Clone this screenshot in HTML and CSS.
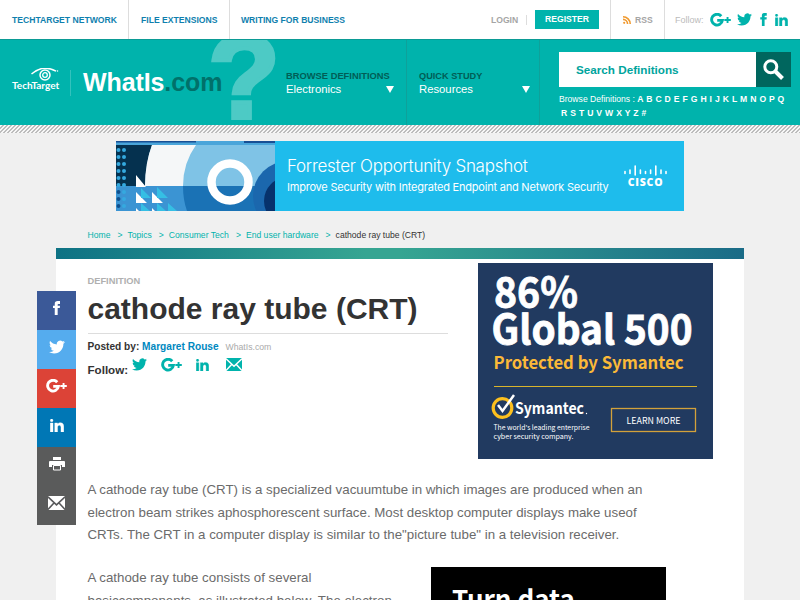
FILE: index.html
```html
<!DOCTYPE html>
<html lang="en">
<head>
<meta charset="UTF-8" />
<meta name="viewport" content="width=device-width, initial-scale=1" />
<title>What is cathode ray tube (CRT)? - WhatIs.com</title>
<link rel="stylesheet" href="styles.css">
</head>
<body>

<!-- shared icons -->
<svg class="sprite" width="0" height="0">
  <symbol id="twitter" viewBox="0 2 24 20"><path d="M23.953 4.57a10 10 0 01-2.825.775 4.958 4.958 0 002.163-2.723c-.951.555-2.005.959-3.127 1.184a4.92 4.92 0 00-8.384 4.482C7.69 8.095 4.067 6.13 1.64 3.162a4.822 4.822 0 00-.666 2.475c0 1.71.87 3.213 2.188 4.096a4.904 4.904 0 01-2.228-.616v.06a4.923 4.923 0 003.946 4.827 4.996 4.996 0 01-2.212.085 4.936 4.936 0 004.604 3.417 9.867 9.867 0 01-6.102 2.105c-.39 0-.779-.023-1.17-.067a13.995 13.995 0 007.557 2.209c9.053 0 13.998-7.496 13.998-13.985 0-.21 0-.42-.015-.63A9.935 9.935 0 0024 4.59z"/></symbol>
  <symbol id="facebook" viewBox="6 0 12 24"><path d="M9 8H6v4h3v12h5V12h3.642L18 8h-4V6.333C14 5.378 14.192 5 15.115 5H18V0h-3.808C10.596 0 9 1.583 9 4.615V8z"/></symbol>
  <symbol id="linkedin" viewBox="0 1 24 23"><path d="M4.980 3.500c0 1.381-1.110 2.500-2.480 2.500S.02 4.881.02 3.500C.02 2.120 1.130 1 2.500 1s2.480 1.120 2.480 2.500zM5 8H0v16h5V8zm7.982 0H8.014v16h4.969v-8.399c0-4.670 6.029-5.052 6.029 0V24H24V13.869c0-7.880-8.922-7.593-11.018-3.714V8z" stroke="currentColor" stroke-width=".6"/></symbol>
  <symbol id="gplus" viewBox="0 0 21 14"><path d="M11.200 3.200A5.400 5.400 0 1 0 12.400 7.400H7.200" fill="none" stroke="currentColor" stroke-width="2.900"/><path d="M16.600 4h1.900v2.100h2.300V8h-2.300v2.100h-1.900V8h-2.300V6.100h2.300z"/></symbol>
  <symbol id="mail" viewBox="0 0 16 13"><rect width="16" height="13" rx="1"/><path d="M0 .8l8 7.400 8-7.400M0 12.500l5.600-6M16 12.500l-5.600-6" fill="none" stroke="var(--line)" stroke-width="1.500"/></symbol>
  <symbol id="print" viewBox="0 0 16 14"><path d="M4 0h8v3H4zM1 4h14a1 1 0 0 1 1 1v5h-3V8H3v2H0V5a1 1 0 0 1 1-1z"/><path d="M4.500 8.500h7v4.500h-7z" fill="none" stroke="currentColor"/></symbol>
</svg>

<nav class="topbar">
  <a href="#" class="network">TECHTARGET NETWORK</a>
  <a href="#" class="files">FILE EXTENSIONS</a>
  <a href="#" class="writing">WRITING FOR BUSINESS</a>
  <div class="account">
    <a href="#" class="login">LOGIN</a>
    <a href="#" class="register">REGISTER</a>
  </div>
  <a href="#" class="rss">
    <svg width="8" height="8" viewBox="0 0 8 8"><circle cx="1.200" cy="6.800" r="1.100" fill="#f09a30"/><path d="M0 3.400a4.600 4.600 0 0 1 4.600 4.600M0 .8A7.200 7.200 0 0 1 7.200 8" fill="none" stroke="#f09a30" stroke-width="1.600"/></svg>
    RSS
  </a>
  <div class="follow">
    <span>Follow:</span>
    <svg class="icon" width="21" height="14"><use href="#gplus"/></svg>
    <svg class="icon" width="15" height="13"><use href="#twitter"/></svg>
    <svg class="icon" width="7" height="13"><use href="#facebook"/></svg>
    <svg class="icon" width="13" height="12"><use href="#linkedin"/></svg>
  </div>
</nav>

<header class="header">
  <div class="brand">
    <div class="techtarget">
      <svg width="28" height="13" viewBox="0 0 28 13" fill="none" stroke="#fff"><path d="M.5 6Q12-4 25 3.200" stroke-width="1.500"/><circle cx="14" cy="7" r="5" stroke-width="1.500"/><circle cx="14" cy="7" r="2.300" stroke-width="1.300"/><circle cx="26.500" cy="3" r=".5" stroke-width=".7"/></svg>
      <span>TechTarget</span>
    </div>
    <div class="question">?</div>
    <div class="site-name">WhatIs<span>.com</span></div>
  </div>
  <div class="menu browse">
    <div>BROWSE DEFINITIONS</div>
    <p>Electronics <i class="arrow"></i></p>
  </div>
  <div class="menu study">
    <div>QUICK STUDY</div>
    <p>Resources <i class="arrow"></i></p>
  </div>
  <div class="search">
    <div class="search-box">
      <span class="search-text">Search Definitions</span>
      <button class="search-btn" aria-label="Search">
        <svg width="21" height="21" viewBox="0 0 21 21" fill="none" stroke="#fff"><circle cx="7.800" cy="7.800" r="6" stroke-width="3"/><path d="M12 12l7.500 7.500" stroke-width="4"/></svg>
      </button>
    </div>
    <div class="letters"><span>Browse Definitions :</span> <b>A B C D E F G H I J K L M N O P Q</b></div>
    <div class="letters second"><b>R S T U V W X Y Z #</b></div>
  </div>
</header>
<div class="stripes"></div>

<div class="banner">
  <svg class="banner-art" width="159" height="70" viewBox="0 0 159 70">
    <rect width="159" height="70" fill="#7fc3e6"/>
    <path d="M0 4h36Q30 20 29 45H0z" fill="#05314f"/>
    <path d="M36 4h44Q67 22 67 45H29Q29 22 36 4z" fill="#f5f7f8"/>
    <path d="M0 45h159v25H0z" fill="#1a72b5"/>
    <path d="M0 45h67q0 14 4 25H0z" fill="#3b94d3"/>
    <path d="M0 0h159v4H0z" fill="#4aa5da"/>
    <path d="M0 0h80v1.500H0zM128 0h31v2h-31z" fill="#174f94"/>
    <circle cx="172" cy="55" r="35" fill="#1b67ad"/>
    <circle cx="172" cy="60" r="24" fill="#07326c"/>
    <circle cx="114" cy="41" r="18.500" fill="none" stroke="#fff" stroke-width="8.500"/>
    <path d="M2.500 9v60M8 9v60" stroke="#35a9df" stroke-width="4" stroke-linecap="round" stroke-dasharray="0 7"/>
    <path d="M2.500 51v18" stroke="#114f8d" stroke-width="4" stroke-linecap="round" stroke-dasharray="0 7"/>
    <path d="M20 34l10 12H20zM20 51l11 11H20zM36 51l11 11H36zM20 67l3 3h-3zM36 67l3 3h-3z" fill="#fff"/>
    <path d="M25 47l10 10H25zM41 46l11 11H41zM25 62l9 8h-9zM41 62l9 8h-9zM52 62l9 8h-9z" fill="#35bfe4"/>
  </svg>
  <div class="banner-text">
    <div class="banner-title">Forrester Opportunity Snapshot</div>
    <div class="banner-sub">Improve Security with Integrated Endpoint and Network Security</div>
  </div>
  <div class="cisco">
    <svg width="43" height="11" viewBox="0 0 43 11" stroke="#fff" stroke-width="1.600" stroke-linecap="round"><path d="M1 6.500v2M6 5v3.500M11.200 1v9M16.400 5v3.500M21.500 6.500v2M26.600 5v3.500M31.800 1v9M37 5v3.500M42 6.500v2"/></svg>
    <span>CISCO</span>
  </div>
</div>

<div class="breadcrumb">
  <a href="#">Home</a><i>&gt;</i><a href="#">Topics</a><i>&gt;</i><a href="#">Consumer Tech</a><i>&gt;</i><a href="#">End user hardware</a><i>&gt;</i><span>cathode ray tube (CRT)</span>
</div>

<main class="page">
  <aside class="share">
    <a href="#" class="fb"><svg class="icon" width="7" height="14"><use href="#facebook"/></svg></a>
    <a href="#" class="tw"><svg class="icon" width="16" height="14"><use href="#twitter"/></svg></a>
    <a href="#" class="gp"><svg class="icon" width="23" height="14"><use href="#gplus"/></svg></a>
    <a href="#" class="li"><svg class="icon" width="14" height="13"><use href="#linkedin"/></svg></a>
    <a href="#" class="pr"><svg class="icon" width="16" height="14"><use href="#print"/></svg></a>
    <a href="#" class="ml"><svg class="icon" width="17" height="14"><use href="#mail"/></svg></a>
  </aside>

  <div class="top">
    <div class="intro">
      <div class="label">DEFINITION</div>
      <h1>cathode ray tube (CRT)</h1>
      <div class="author"><b>Posted by:</b> <a href="#">Margaret Rouse</a> <span>WhatIs.com</span></div>
      <div class="author-follow">
        <b>Follow:</b>
        <svg class="icon" width="15" height="13"><use href="#twitter"/></svg>
        <svg class="icon" width="21" height="14"><use href="#gplus"/></svg>
        <svg class="icon" width="13" height="12"><use href="#linkedin"/></svg>
        <svg class="icon" width="16" height="13"><use href="#mail"/></svg>
      </div>
    </div>
    <div class="ad">
      <svg width="235" height="196" viewBox="0 0 235 196">
        <rect width="235" height="196" fill="#213a60"/>
        <g class="ad-font">
          <text x="16" y="43.500" class="ad-big" textLength="84" lengthAdjust="spacingAndGlyphs">86%</text>
          <text x="13.500" y="80.500" class="ad-big" textLength="201" lengthAdjust="spacingAndGlyphs">Global 500</text>
          <text x="15.500" y="106" class="ad-mid" textLength="190" lengthAdjust="spacingAndGlyphs">Protected by Symantec</text>
          <text x="37" y="151" class="ad-logo" textLength="69" lengthAdjust="spacingAndGlyphs">Symantec</text>
          <text x="15.500" y="167" class="ad-small" textLength="96" lengthAdjust="spacingAndGlyphs">The world's leading enterprise</text>
          <text x="15.500" y="176" class="ad-small" textLength="80" lengthAdjust="spacingAndGlyphs">cyber security company.</text>
          <text x="148.500" y="160.500" class="ad-btn" textLength="54" lengthAdjust="spacingAndGlyphs">LEARN MORE</text>
        </g>
        <path d="M16 123.500h203" stroke="#d9b42c"/>
        <circle cx="24.500" cy="145" r="9.300" fill="none" stroke="#fdc01e" stroke-width="3.200"/>
        <path d="M20 142l4.500 6L36 132" fill="none" stroke="#fff" stroke-width="2.500"/>
        <circle cx="108.500" cy="150.500" r=".7" fill="#fff"/>
        <rect x="133.500" y="145.500" width="84" height="23" fill="none" stroke="#d3a13b" stroke-width="1.300"/>
      </svg>
    </div>
  </div>

  <article class="article">
    <p>A cathode ray tube (CRT) is a specialized vacuumtube in which images are produced when an<br>electron beam strikes aphosphorescent surface. Most desktop computer displays make useof<br>CRTs. The CRT in a computer display is similar to the"picture tube" in a television receiver.</p>
    <div class="black-ad">Turn data</div>
    <p>A cathode ray tube consists of several<br>basiccomponents, as illustrated below. The electron</p>
  </article>
</main>

</body>
</html>
```
FILE: styles.css
```css
* {
  box-sizing: border-box;
}
body {
  font-family: "Liberation Sans", Arial, sans-serif;
  background: #f0f0f0;
  color: #333;
  margin: 0;
  height: 600px;
  overflow: hidden;
}
a {
  color: #00b3ac;
  text-decoration: none;
}
.sprite {
  position: absolute;
}
.icon {
  fill: currentColor;
  color: #00b3ac;
  --line: #fff;
  flex: none;
}

/* top bar */
.topbar {
  display: flex;
  height: 40px;
  background: #fff;
  border-bottom: 1px solid #0b9b95;
  font-size: 8.6px;
  font-weight: bold;
}
.topbar > * {
  display: flex;
  align-items: center;
  border-right: 1px solid #ddd;
  padding-left: 12px;
}
.topbar > a {
  color: #0f7fae;
}
.topbar .network {
  width: 129px;
}
.topbar .files {
  width: 101px;
}
.topbar .writing {
  border: none;
  padding-left: 11px;
}
.account {
  margin-left: auto;
  width: 132px;
}
.account .login {
  color: #a5a5a5;
  border-right: 1px solid #ddd;
  width: 36px;
  margin-right: 8px;
}
.account .register {
  background: #00b3ac;
  color: #fff;
  width: 64px;
  height: 19px;
  line-height: 19px;
  text-align: center;
}
.topbar .rss {
  width: 54px;
  color: #a5a5a5;
  gap: 4px;
}
.follow {
  width: 135px;
  gap: 6px;
  font-size: 9px;
  font-weight: normal;
  color: #bbb;
}
.topbar .follow {
  border: none;
  padding-left: 10px;
}
.follow .icon:nth-of-type(n+3) {
  margin-left: 2px;
}

/* header */
.header {
  display: flex;
  height: 85px;
  background: #00b3ac;
  color: #fff;
}
.brand {
  position: relative;
  display: flex;
  align-items: center;
  width: 274px;
  padding-left: 12px;
}
.techtarget {
  width: 59px;
  height: 26px;
  border-right: 1px solid #33c2bd;
  font-family: Lato, sans-serif;
  font-weight: bold;
  font-size: 10px;
}
.techtarget svg {
  display: block;
  margin: -2px 0 -2px 19px;
}
.techtarget span {
  display: block;
  line-height: 12px;
}
.site-name {
  position: relative;
  margin-left: 12px;
  font-size: 25px;
  font-weight: bold;
  letter-spacing: -0.1px;
}
.site-name span {
  color: #00716a;
}
.question {
  position: absolute;
  left: 208px;
  top: 0;
  width: 76px;
  height: 85px;
  overflow: hidden;
  font-size: 118px;
  font-weight: bold;
  line-height: 74px;
  color: #4dcac5;
  -webkit-text-stroke: 4px #4dcac5;
}
.menu {
  width: 133px;
  border-right: 1px solid #0ea19a;
  padding: 30px 0 0 12px;
  font-size: 11.3px;
}
.menu div {
  color: #005e56;
  font-size: 9.35px;
  font-weight: bold;
  line-height: 12px;
  white-space: nowrap;
}
.menu.study div {
  font-size: 9.2px;
}
.menu p {
  display: flex;
  justify-content: space-between;
  align-items: center;
  margin: 0;
  padding-right: 9px;
  line-height: 14px;
}
.menu.browse p {
  padding-right: 12px;
}
.arrow {
  border: 4.5px solid transparent;
  border-top: 7px solid #fff;
  border-bottom: 0;
}
.search {
  padding: 12px 0 0 19px;
}
.search-box {
  display: flex;
  width: 232px;
  height: 35px;
  background: #fff;
  margin-bottom: 5px;
}
.search-text {
  flex: 1;
  padding-left: 17px;
  color: #00a49d;
  font-size: 11.7px;
  font-weight: bold;
  line-height: 35px;
}
.search-btn {
  width: 35px;
  border: none;
  padding: 0;
  background: #00665e;
  display: flex;
  align-items: center;
  justify-content: center;
}
.letters {
  font-size: 8.6px;
  line-height: 14px;
  white-space: nowrap;
}
.letters b {
  letter-spacing: .3px;
}
.letters.second {
  padding-left: 2px;
}
.stripes {
  height: 8px;
  background: repeating-linear-gradient(135deg, #f7f7f7 0 1.8px, #bdbdbd 1.8px 2.83px);
}

/* banner */
.banner {
  display: flex;
  width: 568px;
  height: 70px;
  margin: 8px 0 0 116px;
  background: #1ebcec;
  color: #fff;
}
.banner-text {
  width: 349px;
  padding: 15px 0 0 12px;
  font-family: Inter, sans-serif;
  white-space: nowrap;
}
.banner-title {
  font-size: 17px;
  font-weight: 300;
  line-height: 20px;
  letter-spacing: -0.27px;
}
.banner-sub {
  font-size: 11px;
  line-height: 22px;
  letter-spacing: -0.21px;
}
.cisco {
  padding-top: 24px;
  width: 43px;
  text-align: center;
  font-family: "Open Sans", sans-serif;
  font-weight: 800;
  font-size: 10.5px;
  letter-spacing: .8px;
  line-height: 13px;
}
.cisco svg {
  display: block;
}

.breadcrumb {
  margin: 19px 0 0 87.5px;
  height: 18px;
  line-height: 10px;
  font-size: 8.6px;
}
.breadcrumb i {
  font-style: normal;
  color: #00b3ac;
  margin: 0 5px 0 7px;
}

/* page */
.page {
  position: relative;
  width: 688px;
  height: 352px;
  margin-left: 56px;
  padding: 0 31px 0 31.5px;
  background: #fff;
}
.page::before {
  content: "";
  display: block;
  height: 11px;
  margin: 0 -31px 0 -31.5px;
  background: linear-gradient(90deg, #0e7284, #36a592 45%, #36a592 50%, #1a6b87);
}
.share {
  position: absolute;
  left: -19px;
  top: 43px;
}
.share a {
  display: flex;
  align-items: center;
  justify-content: center;
  width: 39px;
  height: 39px;
  padding-bottom: 5px;
}
.share .icon {
  color: #fff;
  --line: #58595b;
}
.fb { background: #3b5998; }
.tw { background: #55acee; }
.gp { background: #dc4337; }
.li { background: #0077b5; }
.pr, .ml { background: #5a5b5b; }

.top {
  display: flex;
  justify-content: space-between;
  height: 220px;
}
.intro {
  width: 360px;
  padding-top: 17px;
}
.label {
  color: #b0b0b0;
  font-size: 9.3px;
  font-weight: bold;
  line-height: 10px;
}
h1 {
  margin: 0 0 6px;
  height: 48px;
  border-bottom: 1px solid #ddd;
  font-size: 30px;
  line-height: 45px;
  white-space: nowrap;
}
.author {
  font-size: 10.15px;
  line-height: 14px;
}
.author a {
  color: #0088c0;
  font-weight: bold;
}
.author span {
  color: #aaa;
  font-size: 8.7px;
  margin-left: 4px;
}
.author-follow {
  display: flex;
  align-items: center;
  font-size: 11.6px;
  margin-top: -1px;
}
.author-follow b {
  margin: 10px 4px 0 0;
}
.author-follow .icon {
  margin-right: 14px;
}
.author-follow .icon:nth-of-type(3) {
  margin-right: 17px;
}
.ad {
  margin: 4px 0 0;
}
.ad svg {
  display: block;
}
.ad-font {
  font-family: "Noto Sans CJK SC", sans-serif;
  fill: #fff;
}
.ad-big {
  font-size: 40px;
  font-weight: bold;
  stroke: #fff;
  stroke-width: .8px;
}
.ad-mid {
  font-size: 17.5px;
  font-weight: bold;
  fill: #fbb938;
}
.ad-logo {
  font-size: 16px;
  font-weight: bold;
}
.ad-small {
  font-size: 7px;
}
.ad-btn {
  font-size: 9px;
}

.article {
  color: #6b6b6b;
  font-size: 13.3px;
  line-height: 22.5px;
  white-space: nowrap;
}
.article p {
  margin: 0 0 20.5px;
}
.black-ad {
  float: right;
  width: 235px;
  height: 60px;
  margin: 0 47px 0 0;
  padding: 15px 0 0 21px;
  background: #000;
  color: #fff;
  font-family: "Noto Sans CJK SC", sans-serif;
  font-size: 26px;
  font-weight: bold;
  line-height: 32px;
}
```
